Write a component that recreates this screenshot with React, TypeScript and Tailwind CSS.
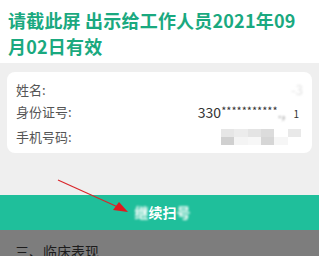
import React from 'react';

const font = { fontFamily: '"Noto Sans CJK SC", "Noto Sans", sans-serif' };

const App: React.FC = () => {
  return (
    <div className="relative w-[319px] h-[256px] overflow-hidden bg-[#efefef]" style={font}>
      {/* Header */}
      <div className="bg-white h-[63px] px-[8px] pt-[7px]">
        <h1 className="text-[18px] leading-[26px] font-bold text-[#1aa97f] tracking-[0.2px]">
          请截此屏 出示给工作人员2021年09月02日有效
        </h1>
      </div>

      {/* Info card */}
      <div className="mx-[7px] mt-[9px] h-[81px] rounded-[8px] bg-white px-[9px] pt-[7px] text-[13px] text-[#555]">
        <div className="flex items-center justify-between h-[22px]">
          <span>姓名:</span>
          <span className="text-[#e2e2e2] blur-[1px]">-3</span>
        </div>
        <div className="flex items-center justify-between h-[22px]">
          <span>身份证号:</span>
          <span className="text-[#333] text-[14px] pr-[4px] whitespace-nowrap">
            330<span className="text-[11px] align-top">***********</span>
            <span className="text-[#999] blur-[1px]">.,</span>
            <span className="ml-[8px] text-[10px]">1</span>
          </span>
        </div>
        <div className="flex items-center justify-between h-[28px]">
          <span>手机号码:</span>
          <div className="grid grid-cols-6 w-[80px] h-[16px] mr-[2px]">
            <div className="bg-[#e6e6e6]" />
            <div className="bg-[#ececec]" />
            <div className="bg-[#e4e4e4]" />
            <div className="bg-[#dcdcdc]" />
            <div className="bg-white" />
            <div className="bg-[#e9e9e9]" />
            <div className="bg-[#d0d0d0]" />
            <div className="bg-[#f4f4f4]" />
            <div className="bg-[#f7f7f7]" />
            <div className="bg-[#d6d6d6]" />
            <div className="bg-[#f6f6f6]" />
            <div className="bg-white" />
          </div>
        </div>
      </div>

      {/* Button bar */}
      <div className="mt-[42px] h-[35px] bg-[#1fbf9b] flex items-center justify-center">
        <span className="text-white font-bold text-[14px] pl-[6px]">
          <span className="blur-[1px]">继</span>续扫<span className="blur-[1px]">号</span>
        </span>
      </div>

      {/* Dimmed section */}
      <div className="h-[26px] bg-[#7d7d7d] px-[15px] pt-[11px] text-[14px] leading-[20px] text-[#1c1c1c]">
        三、临床表现
      </div>

      {/* Red arrow annotation */}
      <svg className="absolute left-0 top-0" width="319" height="256" viewBox="0 0 319 256">
        <line x1="58" y1="180" x2="120" y2="208" stroke="#d9262b" strokeWidth="1.2" />
        <polygon points="128,212 113,210 119,202" fill="#e0191f" />
      </svg>
    </div>
  );
};

export default App;
